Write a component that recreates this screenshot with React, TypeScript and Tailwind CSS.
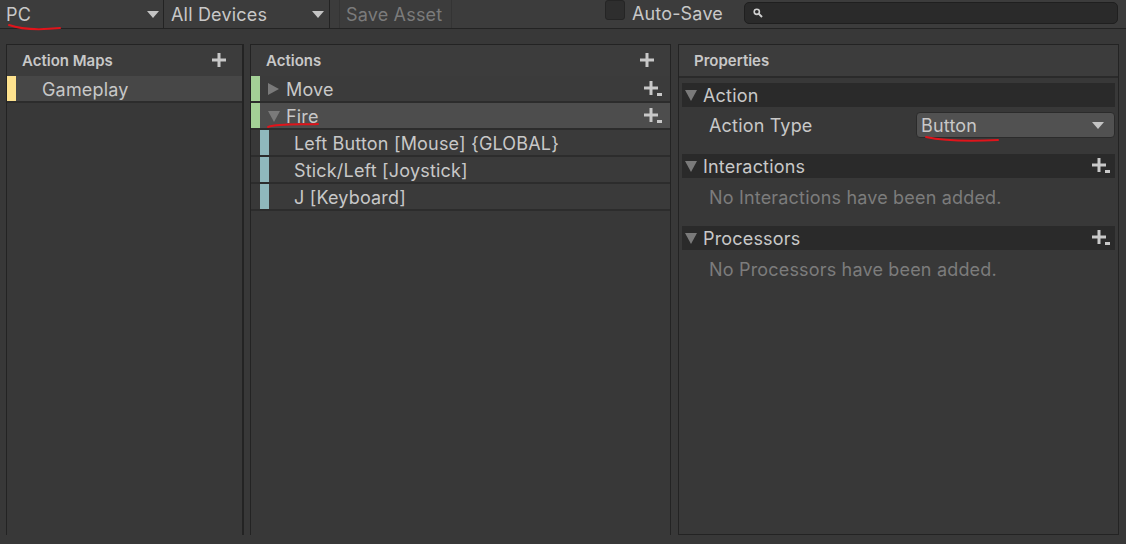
import React from 'react';

const rowText = 'text-[18px] tracking-[0.01em] text-[#c8c8c8]';

function Caret({ className = '' }: { className?: string }) {
  return (
    <svg width="12" height="7" viewBox="0 0 12 7" className={className}>
      <path d="M0 0h12L6 7z" fill="#c4c4c4" />
    </svg>
  );
}

function Plus({ menu = false }: { menu?: boolean }) {
  return (
    <svg width="19" height="16" viewBox="0 0 19 16">
      <rect x="0" y="5.5" width="14" height="3" fill="#c8c8c8" />
      <rect x="5.5" y="0" width="3" height="14" fill="#c8c8c8" />
      {menu && <rect x="13" y="12" width="5" height="3" fill="#c8c8c8" />}
    </svg>
  );
}

function Tri({ open }: { open: boolean }) {
  return open ? (
    <svg width="12" height="12" viewBox="0 0 12 12">
      <path d="M0 1h12L6 12z" fill="#7a7a7a" />
    </svg>
  ) : (
    <svg width="12" height="12" viewBox="0 0 12 12">
      <path d="M0 0l11 6L0 12z" fill="#7a7a7a" />
    </svg>
  );
}

function PanelHeader({ title, plus = true }: { title: string; plus?: boolean }) {
  return (
    <div className="flex h-[31px] items-center justify-between bg-[#3c3c3c] pl-[15px] pr-[11px]">
      <span className="pt-[2px] text-[15px] font-semibold text-[#c8c8c8]">{title}</span>
      {plus && <Plus />}
    </div>
  );
}

function Section({ title, plus = false }: { title: string; plus?: boolean }) {
  return (
    <div className="flex h-[24px] items-center justify-between bg-[#2a2a2a] pl-[3px] pr-[4px]">
      <div className="flex items-center gap-[6px]">
        <Tri open />
        <span className={`${rowText} pt-[1px]`}>{title}</span>
      </div>
      {plus && <Plus menu />}
    </div>
  );
}

const bindings = ['Left Button [Mouse] {GLOBAL}', 'Stick/Left [Joystick]', 'J [Keyboard]'];

export default function App() {
  return (
    <div className="relative h-[544px] w-[1126px] overflow-hidden bg-[#383838] font-['Inter',sans-serif] text-[#c8c8c8]">
      {/* toolbar */}
      <div className="flex h-[29px] items-stretch border-b border-[#232323] bg-[#3c3c3c] text-[18px] tracking-[0.01em]">
        <div className="flex w-[164px] items-center justify-between border-r border-[#232323] pl-[6px] pr-[4px]">
          <span>PC</span>
          <Caret />
        </div>
        <div className="flex w-[166px] items-center justify-between border-r border-[#232323] pl-[7px] pr-[5px]">
          <span>All Devices</span>
          <Caret />
        </div>
        <div className="ml-[9px] flex w-[113px] items-center border-x border-[#343434] pl-[6px] text-[#7b7b7b]">
          Save Asset
        </div>
        <div className="flex-1" />
        <div className="flex items-start gap-[7px]">
          <div className="h-[20px] w-[20px] rounded-[3px] border border-[#252525] bg-[#2e2e2e]" />
          <span className="leading-[28px]">Auto-Save</span>
        </div>
        <div className="ml-[21px] mr-[8px] mt-[2px] flex h-[22px] w-[374px] items-center rounded-[5px] border border-[#1f1f1f] bg-[#2a2a2a] pl-[8px]">
          <svg width="10" height="10" viewBox="0 0 10 10">
            <circle cx="3.8" cy="3.8" r="2.6" fill="none" stroke="#d0d0d0" strokeWidth="1.6" />
            <path d="M5.6 5.6L9 9" stroke="#d0d0d0" strokeWidth="2" />
          </svg>
        </div>
      </div>

      {/* panels */}
      <div className="mt-[15px] flex">
        <div className="ml-[6px] flex h-[491px] w-[238px] flex-col border-l border-r-2 border-t border-[#232323]">
          <PanelHeader title="Action Maps" />
          <div className="flex h-[27px] border-b-2 border-[#2c2c2c] bg-[#474747]">
            <div className="w-[9px] bg-[#fde28e]" />
            <span className={`${rowText} pl-[26px] pt-[1px] leading-[25px]`}>Gameplay</span>
          </div>
        </div>

        <div className="ml-[6px] flex h-[491px] w-[421px] flex-col border-x border-t border-[#232323]">
          <PanelHeader title="Actions" />
          <div className="flex h-[27px] items-center border-b-2 border-[#2c2c2c] bg-[#3b3b3b] pr-[7px]">
            <div className="h-full w-[9px] bg-[#a3d096]" />
            <div className="ml-[8px] mr-[6px]"><Tri open={false} /></div>
            <span className={`${rowText} flex-1 pt-[2px]`}>Move</span>
            <Plus menu />
          </div>
          <div className="flex h-[27px] items-center border-b-2 border-[#2c2c2c] bg-[#4d4d4d] pr-[7px]">
            <div className="h-full w-[9px] bg-[#a3d096]" />
            <div className="ml-[8px] mr-[6px]"><Tri open /></div>
            <span className={`${rowText} flex-1 pt-[2px]`}>Fire</span>
            <Plus menu />
          </div>
          {bindings.map((b) => (
            <div key={b} className="flex h-[27px] items-center border-b-2 border-[#2c2c2c] bg-[#3a3a3a]">
              <div className="h-full w-[9px] bg-[#383838]" />
              <div className="h-full w-[9px] bg-[#8fb8bc]" />
              <span className={`${rowText} pl-[25px] pt-[2px]`}>{b}</span>
            </div>
          ))}
        </div>

        <div className="ml-[7px] flex h-[491px] w-[441px] flex-col border border-[#232323]">
          <div className="border-b-2 border-[#2a2a2a]">
            <PanelHeader title="Properties" plus={false} />
          </div>
          <div className="flex flex-col px-[3px] pt-[5px]">
            <Section title="Action" />
            <div className="mt-[5px] flex h-[26px] items-center justify-between">
              <span className={`${rowText} pl-[27px] pt-[1px]`}>Action Type</span>
              <div className="flex h-[26px] w-[199px] items-center justify-between rounded-[4px] border border-[#2b2b2b] bg-[#515151] pl-[4px] pr-[10px]">
                <span className={`${rowText} pt-[1px]`}>Button</span>
                <Caret />
              </div>
            </div>
            <div className="mt-[16px]"><Section title="Interactions" plus /></div>
            <div className="flex h-[38px] items-center pl-[27px] pt-[1px] text-[18px] tracking-[0.01em] text-[#7c7c7c]">
              No Interactions have been added.
            </div>
            <div className="mt-[10px]"><Section title="Processors" plus /></div>
            <div className="flex h-[38px] items-center pl-[27px] pt-[1px] text-[18px] tracking-[0.01em] text-[#7c7c7c]">
              No Processors have been added.
            </div>
          </div>
        </div>
      </div>

      {/* red annotation marks */}
      <svg className="pointer-events-none absolute left-0 top-0" width="1126" height="544">
        <g fill="none" stroke="#e0141b" strokeWidth="2" strokeLinecap="round">
          <path d="M9 25 C20 29, 40 30, 60 28" />
          <path d="M268 127 C280 123, 300 125, 318 124" />
          <path d="M926 137 C940 140, 960 142, 998 140" />
        </g>
      </svg>
    </div>
  );
}
